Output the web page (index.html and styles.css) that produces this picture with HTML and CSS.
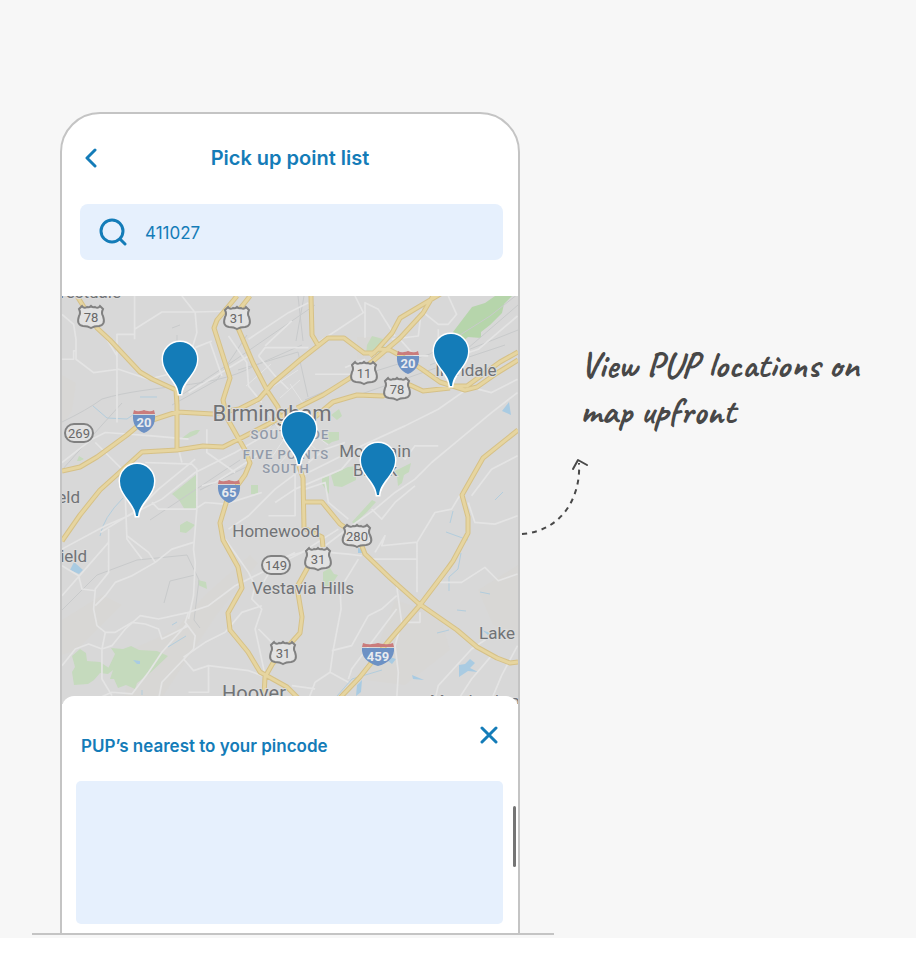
FILE: index.html
```html
<!DOCTYPE html>
<html lang="en">
<head>
    <meta charset="UTF-8">
    <meta name="viewport" content="width=device-width, initial-scale=1.0">
    <title>Pick up point list</title>
    <link rel="stylesheet" href="styles.css">
</head>
<body>
    <main class="stage">
        <div class="device">
            <div class="phone">
                <header class="topbar">
                    <button type="button" class="icon-btn" aria-label="Back">
                        <svg width="12" height="20" viewBox="0 0 12 20"><path d="M10 2 2 10l8 8"/></svg>
                    </button>
                    <h1>Pick up point list</h1>
                </header>

                <form class="search">
                    <label for="pincode" aria-label="Pincode">
                        <svg width="28" height="28" viewBox="0 0 28 28"><circle cx="13" cy="13" r="11"/><path d="m21 21 5 5"/></svg>
                    </label>
                    <input type="text" id="pincode" value="411027">
                </form>

                <svg class="map" viewBox="62 296 456 408" preserveAspectRatio="xMidYMin slice" role="img" aria-label="Map of pick up points">
                    <defs>
                        <path id="pin" d="M-1 35C-2 21-17 15-17 0a17 17 0 0 1 34 0C17 15 2 21 1 35Z"/>
                        <path id="us" d="M-9-11Q-7-8-4-10Q-2-9 0-11Q2-9 4-10Q7-8 9-11L12-8Q10-4 12-1Q15 8 8 9Q3 9 0 11Q-3 9-8 9Q-15 8-12-1Q-10-4-12-8Z"/>
                        <g id="interstate">
                            <path class="shield-blue" d="M-11-6H11Q12 7 0 12Q-12 7-11-6Z"/>
                            <path class="shield-red" d="M-10-11Q-7-9-4-10Q-2-10 0-11Q2-10 4-10Q7-9 10-11L11-7H-11Z"/>
                        </g>
                    </defs>

                    <rect class="land" x="62" y="296" width="456" height="408"/>

                    <!-- built-up areas -->
                    <g class="urban">
                        <path d="m62 375 14 8-4 28-10 14zM62 620l40-25 20 10-45 45-15 5zM130 650l45-20 30-35 45-40 8 8-40 50-30 45-25 38h-38z"/>
                        <path d="M357 337h28v22h-28zM395 600l45 15 10 35-45 35-40-5zM478 590l40-25v70l-25-10z"/>
                    </g>

                    <g class="park">
                        <path class="park-bright" d="m472 307 13-4 10-7h17l-8 8-2 9-12 12-9 7v6l-13-1-6 5-9-10z"/>
                        <path d="M367 345l5-9 11 3 2 11-12 5h-7z"/>
                        <path d="m172 494 25-20v36h-12l-6-10zM180 525l5-3 2-1 8 4-4 4-5 4-6-1zM190 432l6-2h4l-3 4-9 4h-6zM251 485h7v9h-7zM79 456l5 3-4 2h-3z"/>
                        <path d="m331 415 8-6 3 7-5 4zM322 435l7-3h10v8l-7 2-3 2-7-4zM322 478l7-2v18l-7-10zM331 475l17-8 8-1v14l-14 7-8-1zM393 472l12-6 6-3-2 9-5 3-2 8-4 3-1-10-7-4zM352 522l20-22 4 2-9 10-13 12zM323 572l7-4 4 6 4 1-4 6-4 7-7-2zM198 580l8 2 1 7-9-4z"/>
                        <path d="m72 656 8-7 6 4 1 8 13 1 9 6-3 5 9-19-4-6 12 1 8-3 8 4 18 1 11 5-18 17-13 10-2 6-9-4-8 3-4-9h-4l3-9-5 4-8-1-6 7-6 4-14 1-2-13 3-5z"/>
                    </g>

                    <g class="water">
                        <path d="m74 562 9 8-4 4-9-4zM502 411l7-9 2 13zM358 548l6 1v4h-6zM133 660l7 1v3h-3zM459 665l6-1 5-5 5 4-5 5 8 4-10-1-9 6zM412 675l12 5-11-1zM357 685l5-5-1 12-5 4zM390 657l6 2-4 5-4-3zM482 630l8 3-2 2z"/>
                        <path class="stream" d="M123 498q-20 20-23 38M93 406l14 12 20 1 10-7M140 397h17M446 532l22 8M450 523l3-12M495 500l8-8M337 696l15-17 30-9M457 610l9 1M172 625l5-3M168 647l18-11M480 592l10 2M437 633l12-3M461 553l-3 16-9 8v14M142 690v5"/>
                    </g>

                    <!-- railways -->
                    <path class="rail" d="M62 422q25-12 40-23c50-15 110-10 150-32l50-22M180 396l55-36 80-55M62 470l40-45 20-22M62 610l35-35 40-15 50-5 12 25-5 40 6 8M195 575l-25 6-6 22M200 490l50-25M305 400l55-24 70-22 60-38 28-22M298 296l5 45M304 296l-8 45M460 355l58-50M430 365l88-35M240 440l40-18M505 345l-75 25-100 35M238 370l60-18 10 45M150 520l90-60M172 405l45-25 30-45M180 325l-8 3M177 335v10"/>

                    <!-- streets, drawn on a finer grid -->
                    <g class="street" transform="translate(62 296) scale(0.333)">
                        <path d="M0 55 35 85 42 130V190L95 230 170 220 260 250 320 235M218 0V130M218 100 300 48H400L520 45M165 215V115H218M165 200V380M360 0 400 50 405 110 390 160M400 155 450 135M380 290 560 180M445 140 480 240M500 120 555 200 560 270 600 320M560 130 680 50 740 20M0 190H35V165H42M135 130 165 180M590 180 610 155H740M590 180 640 240 680 280M610 150 690 75"/>
                        <path d="M760 145 830 100 905 50 880 0M910 125V20L950 40 1000 120M990 130 1070 120 1080 40M1080 45 1130 85H1160L1185 55 1160 0M1190 180 1250 160 1368 60M1130 100V165M1015 130 1060 180H1100M850 215 910 190M760 235H870M1210 270 1290 290 1368 250M1230 270 1130 340 1030 390 900 450 800 500 720 540M1368 290 1290 350 1170 450 1110 500 1060 550 1000 590 940 640 870 690 790 750 650 790M1130 450H1060L1030 490 1010 470"/>
                        <path d="M0 500 90 430 130 410 270 420 380 430M100 440 130 470 180 520 190 600 195 730 240 790M0 760 130 690 200 660 300 610 400 530 520 470 640 400M115 710 230 640 290 580 400 490M250 500 390 505 405 520V640H290L270 620M405 640 395 760 400 800 395 900 380 970M350 460 360 500M435 400V470L520 530M420 570 460 560 600 470M400 640 430 620 490 625 600 590"/>
                        <path d="M140 700V830L100 880 95 940 105 990 130 1010 120 1060V1150L150 1200M0 810 50 840 60 880 100 885M0 900 140 740M100 930 130 900 160 860 210 840 280 800 330 760 395 740M195 720 260 770 280 800M0 1110 40 1060 80 1045 120 1060 150 1050 190 1000 235 960 290 970 380 950 440 930 520 870 600 830 720 770 830 700M130 1010H160L210 980 250 985 290 1000 300 1030 380 990M380 950 370 980 400 1020 395 1060 300 1160 290 1212M100 1212 150 1190 210 1195 260 1130 300 1070 375 985"/>
                        <path d="M365 1090 395 1125 440 1110 560 1125 600 1140M440 1110V1190H380M365 1085 430 1040 490 1010 540 950 600 930M490 730 560 830 580 870 570 910 600 940 580 1000 610 1140M590 1000 630 1040M500 700 560 660 640 580 720 520M605 860 640 800 700 770M700 530V660H620M640 620 700 580 840 520 900 450M730 580 790 560 800 620 860 670M740 500 790 460 850 440"/>
                        <path d="M930 640 960 670 1000 620 1060 570M940 770 970 720 960 750 1060 740 1066 740 1120 650 1170 640 1200 590M800 770 860 775 900 780M930 790H1066M1066 740V890M1220 620 1240 680 1300 685 1368 660M1230 600 1290 520 1368 480M1130 860H1200L1270 815 1310 855 1368 835M1005 870 1020 980 1000 1050 1010 1130 1005 1212M1075 950V980H1020M890 790 835 880 838 940 815 1060 805 1130 860 1160M810 1065 870 1050 920 960 960 940 1005 900M860 1150 870 1120 930 1040 1005 940M690 1170 760 1180M805 1130 760 1160 740 1212M1120 1212 1130 1170 1230 1060 1290 1020M1190 1212 1230 1150 1290 1080M1290 1212 1320 1140 1368 1050"/>
                    </g>

                    <g class="tangle">
                        <path d="M283 410l45 35M279 417l40 35M275 424l36 28M290 430l-20 30M302 438l-22 25M264 408l25 35M268 390l30-20M280 398l20-18M290 384l15 22M270 440l25-22M260 436l30-28M256 404l20-25M246 386l25-22"/>
                    </g>

                    <g class="highway">
                        <path id="roads" d="M77 296l20 32 13 12 30 32 12 7 24 11 1 15v45M62 471l18-4 17-10 30-22 13-11 37-12 36 2 26-5 20-10 14-16 27-23 28-22h16l20 15h10l18-20 8-15 42-25M297 408l26-13 27-17 23-17 27-23 23-25 10-17M370 356l8-7 12 1 13 7 20 13 17 12 25 8 12-3 20-14 21-13M450 386l17 0 33-24 18-10M300 430l15-13 18-15 24-7 26 1 27-11 13 6 27-3M311 296l1 39 7 12M62 541l18-26 20-25 20-18 22-20 35-2 26-4 20 1 20-10 37-19 12-10M304 502h18l18 22 18 12 7 18 25 24 28 25 39 27 20 17 20 11 13 5 8-1M298 463l5 15 1 50 18 9 1 10M308 567l-11 20 5 30-2 16-27 30-8 14-1 19M237 296l-20 24-3 8 16 50-7 22 4 18 18 32 5 13-5 12-18 25-7 23 3 17 15 27 4 21-14 25 2 17 18 22 12 20 27 15 12 12M250 296l-11 14-1 18 15 35 15 29 10 15 2 13 18 40M518 430l-35 28-21 37 6 22v16l-15 28-5 7-28 37-33 38-27 34-24 25"/>
                        <use href="#roads" class="highway-fill"/>
                    </g>

                    <g class="place">
                        <text x="121" y="298" class="town end">Forestdale</text>
                        <text x="272" y="421" class="city">Birmingham</text>
                        <text x="466" y="376" class="town">Irondale</text>
                        <text x="375" y="457" class="town">Mountain</text>
                        <text x="375" y="476" class="town">Brook</text>
                        <text x="276" y="537" class="town">Homewood</text>
                        <text x="303" y="594" class="town">Vestavia Hills</text>
                        <text x="497" y="639" class="town">Lake</text>
                        <text x="254" y="700" class="suburb">Hoover</text>
                        <text x="80" y="503" class="town end">eld</text>
                        <text x="87" y="562" class="town end">ield</text>
                        <text x="484" y="707" class="town">Meadowbrook</text>
                        <text x="290" y="439" class="area">SOUTHSIDE</text>
                        <text x="286" y="459" class="area">FIVE POINTS</text>
                        <text x="286" y="473" class="area">SOUTH</text>
                    </g>

                    <g class="route">
                        <g transform="translate(91 317)"><use href="#us"/><text y="5">78</text></g>
                        <g transform="translate(237 318)"><use href="#us"/><text y="5">31</text></g>
                        <g transform="translate(364 373)"><use href="#us"/><text y="5">11</text></g>
                        <g transform="translate(397 389)"><use href="#us"/><text y="5">78</text></g>
                        <g transform="translate(318 559)"><use href="#us"/><text y="5">31</text></g>
                        <g transform="translate(283 653)"><use href="#us"/><text y="5">31</text></g>
                        <g transform="translate(357 536)">
                            <path d="M-10-11Q-7-8-4-10Q-2-9 0-11Q2-9 4-10Q7-8 10-11L13-8Q11-4 13-1Q17 8 9 9Q3 9 0 11Q-3 9-9 9Q-17 8-13-1Q-11-4-13-8Z"/>
                            <text y="5">280</text>
                        </g>
                        <g transform="translate(79 433)"><rect x="-14" y="-9" width="28" height="18" rx="9"/><text y="5">269</text></g>
                        <g transform="translate(276 565)"><rect x="-14" y="-9" width="28" height="18" rx="9"/><text y="5">149</text></g>
                    </g>
                    <g class="route interstate">
                        <g transform="translate(144 421)"><use href="#interstate"/><text y="6">20</text></g>
                        <g transform="translate(408 362)"><use href="#interstate"/><text y="6">20</text></g>
                        <g transform="translate(229 491)"><use href="#interstate"/><text y="6">65</text></g>
                        <g transform="translate(378 654)">
                            <path class="shield-blue" d="M-16-6H16Q17 7 0 12Q-17 7-16-6Z"/>
                            <path class="shield-red" d="M-15-11Q-10-9-6-10Q-3-10 0-11Q3-10 6-10Q10-9 15-11L16-7H-16Z"/>
                            <text y="7">459</text>
                        </g>
                    </g>

                    <g class="pins">
                        <use href="#pin" x="180" y="359"/>
                        <use href="#pin" x="299" y="429"/>
                        <use href="#pin" x="451" y="351"/>
                        <use href="#pin" x="378" y="460"/>
                        <use href="#pin" x="137" y="481"/>
                    </g>
                </svg>

                <section class="sheet">
                    <div class="sheet-head">
                        <h2>PUP’s nearest to your pincode</h2>
                        <button type="button" class="icon-btn" aria-label="Close">
                            <svg width="18" height="18" viewBox="0 0 18 18"><path d="m2 2 14 14M16 2 2 16"/></svg>
                        </button>
                    </div>
                    <div class="card"></div>
                    <span class="scroll-thumb"></span>
                </section>
            </div>
        </div>

        <aside class="note">
            <p>View PUP locations on<br>map upfront</p>
            <svg width="70" height="80" viewBox="0 0 70 80" aria-hidden="true">
                <path class="dashes" d="M2 77C42 74 61 40 59 6"/>
                <path d="m53 12 5-9 9 5"/>
            </svg>
        </aside>
    </main>
</body>
</html>
```
FILE: styles.css
```css
* {
    box-sizing: border-box;
}
body {
    margin: 0;
    background: #fff;
    color: #147cb8;
    font-family: Inter, "Liberation Sans", sans-serif;
}
h1, h2, p {
    margin: 0;
}
svg {
    display: block;
}
.stage {
    display: flex;
    align-items: flex-start;
    padding: 112px 0 3px 60px;
    background: #f7f7f7;
}

/* phone */
.device {
    position: relative;
    flex: 0 1 460px;
    min-width: 320px;
}
.device::after {
    content: "";
    position: absolute;
    left: -28px;
    right: -34px;
    bottom: 0;
    height: 2px;
    background: #c4c4c4;
}
.phone {
    border: 2px solid #c4c4c4;
    border-radius: 40px 40px 0 0;
    background: #fff;
    overflow: hidden;
}
.icon-btn {
    padding: 0;
    border: 0;
    background: none;
    cursor: pointer;
}
.icon-btn svg,
.search svg {
    fill: none;
    stroke: #147cb8;
    stroke-width: 3;
    stroke-linecap: round;
    stroke-linejoin: round;
}
.topbar {
    display: grid;
    grid-template-columns: 12px 1fr 12px;
    align-items: center;
    padding: 28px 23px 0;
}
.topbar h1 {
    font-size: 20px;
    font-weight: 600;
    line-height: 32px;
    text-align: center;
}
.search {
    display: flex;
    align-items: center;
    gap: 18px;
    height: 56px;
    margin: 30px 15px 36px 18px;
    padding: 0 19px;
    border-radius: 8px;
    background: #e6f0fd;
}
.search input {
    flex: 1;
    min-width: 0;
    padding: 2px 0 0;
    border: 0;
    outline: 0;
    background: none;
    color: inherit;
    font: 17px Inter, sans-serif;
}

/* map */
.map {
    width: 100%;
    height: 408px;
    font-family: Roboto, sans-serif;
    text-anchor: middle;
}
.land {
    fill: #d8d8d8;
}
.urban {
    fill: #d8d7d5;
}
.park {
    fill: #c5dabd;
}
.park-bright {
    fill: #b6d5ab;
}
.water {
    fill: #a9cbe2;
}
.stream {
    fill: none;
    stroke: #b2cddd;
}
.rail, .street, .tangle, .highway {
    fill: none;
    stroke-linejoin: round;
}
.rail {
    stroke: #c8cacb;
}
.street {
    stroke: #e4e4e4;
    stroke-width: 5;
}
.tangle {
    stroke: #e4e4e4;
}
.highway {
    stroke: #d6c187;
    stroke-width: 5;
}
.highway-fill {
    stroke: #e6d5a0;
    stroke-width: 3;
}
.place {
    fill: #717376;
    stroke: #dcdcdc;
    stroke-width: 2;
    paint-order: stroke;
}
.town {
    font-size: 17px;
}
.city {
    font-size: 22px;
}
.suburb {
    font-size: 20px;
}
.end {
    text-anchor: end;
}
.area {
    fill: #9099a8;
    font-size: 13px;
    font-weight: 500;
    letter-spacing: 1px;
}
.route {
    fill: #e2e2e2;
    stroke: #818181;
    stroke-width: 2;
    font-size: 13px;
}
.route text {
    fill: #686868;
    stroke: none;
}
.interstate {
    stroke: none;
    font-weight: 700;
}
.interstate text {
    fill: #e8ebef;
}
.shield-blue {
    fill: #6d91c4;
}
.shield-red {
    fill: #ca7c7c;
}
.pins {
    fill: #147cb8;
    stroke: #fff;
    stroke-width: 3;
    paint-order: stroke;
}

/* bottom sheet */
.sheet {
    position: relative;
    margin-top: -8px;
    padding: 28px 15px 9px 14px;
    border-radius: 12px 12px 0 0;
    background: #fff;
}
.sheet-head {
    display: flex;
    justify-content: space-between;
    align-items: flex-start;
    margin-bottom: 19px;
    padding: 2px 5px 0;
}
.sheet h2 {
    padding-top: 4px;
    font-size: 17px;
    font-weight: 600;
    line-height: 32px;
}
.card {
    height: 143px;
    border-radius: 5px;
    background: #e6f0fd;
}
.scroll-thumb {
    position: absolute;
    top: 110px;
    right: 2px;
    width: 3px;
    height: 61px;
    border-radius: 2px;
    background: #757575;
}

/* handwritten callout */
.note {
    margin-top: 230px;
    color: #484848;
}
.note p {
    padding-left: 60px;
    font-family: Caveat, Lato, sans-serif;
    font-size: 37px;
    font-weight: 700;
    line-height: 46px;
    white-space: nowrap;
}
.note svg {
    margin-top: 23px;
    fill: none;
    stroke: #484848;
    stroke-width: 2;
    stroke-linecap: round;
    stroke-linejoin: round;
}
.note .dashes {
    stroke-dasharray: 5 5;
    stroke-linecap: butt;
}
```
